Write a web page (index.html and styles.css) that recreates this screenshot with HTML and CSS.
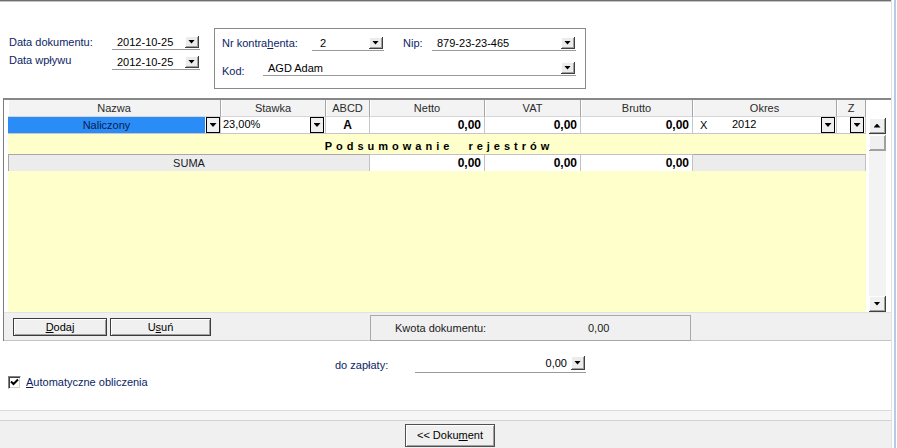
FILE: index.html
```html
<!DOCTYPE html>
<html lang="pl">
<head>
<meta charset="utf-8">
<title>Dokument</title>
<link rel="stylesheet" href="styles.css">
</head>
<body>
<div class="app">
  <div class="main">
    <div class="topline"></div>

    <div class="head">
      <div class="dates">
        <span class="lbl">Data dokumentu:</span>
        <div class="field"><span class="val pl5">2012-10-25</span><span class="dd"></span></div>
        <span class="lbl lbl-up">Data wpływu</span>
        <div class="field"><span class="val pl5">2012-10-25</span><span class="dd"></span></div>
      </div>

      <div class="group">
        <div class="grow">
          <span class="lbl w-nr">Nr kontra<u>h</u>enta:</span>
          <div class="field f-nr"><span class="val pl8">2</span><span class="dd"></span></div>
          <span class="lbl w-nip">Nip:</span>
          <div class="field f-nip"><span class="val pl5">879-23-23-465</span><span class="dd"></span></div>
        </div>
        <div class="grow grow2">
          <span class="lbl w-kod">Kod:</span>
          <div class="field f-kod"><span class="val pl5">AGD Adam</span><span class="dd"></span></div>
        </div>
      </div>
    </div>

    <div class="gridframe">
      <div class="gridbody">
        <div class="table">
          <div class="row hdr">
            <div class="c">Nazwa</div>
            <div class="c">Stawka</div>
            <div class="c">ABCD</div>
            <div class="c">Netto</div>
            <div class="c">VAT</div>
            <div class="c">Brutto</div>
            <div class="c">Okres</div>
            <div class="c">Z</div>
          </div>
          <div class="row rdata">
            <div class="c cflex"><span class="sel">Naliczony</span><span class="ddf"></span></div>
            <div class="c cflex"><span class="val pl2">23,00%</span><span class="ddf"></span></div>
            <div class="c bold center">A</div>
            <div class="c bold num">0,00</div>
            <div class="c bold num">0,00</div>
            <div class="c bold num">0,00</div>
            <div class="c cflex"><span class="okx">X</span><span class="val">2012</span><span class="ddf"></span></div>
            <div class="c cflex end"><span class="ddf"></span></div>
          </div>
          <div class="rtitle">Podsumowanie rejestrów</div>
          <div class="row rsum">
            <div class="c gray span3 center">SUMA</div>
            <div class="c bold num">0,00</div>
            <div class="c bold num">0,00</div>
            <div class="c bold num">0,00</div>
            <div class="c gray span2"></div>
          </div>
          <div class="fill"></div>
        </div>
        <div class="vscroll">
          <div class="sb"><span class="arr-up"></span></div>
          <div class="thumb"></div>
          <div class="track"></div>
          <div class="sb"><span class="arr-down"></span></div>
        </div>
      </div>
      <div class="bbar">
        <div class="btn b-dodaj"><u>D</u>odaj</div>
        <div class="btn b-usun">U<u>s</u>uń</div>
        <div class="kwota"><span class="k-lbl">Kwota dokumentu:</span><span>0,00</span></div>
      </div>
    </div>

    <div class="below">
      <div class="pay">
        <span class="lbl pay-lbl">do zapłaty:</span>
        <div class="field f-pay"><span class="val right">0,00</span><span class="dd"></span></div>
      </div>
      <div class="chkrow">
        <span class="chk"><svg width="9" height="9" viewBox="0 0 9 9"><polyline points="1,3.5 3.5,6 8,1.5" fill="none" stroke="#000" stroke-width="2"/></svg></span>
        <span class="lbl chk-lbl"><u>A</u>utomatyczne obliczenia</span>
      </div>
    </div>

    <div class="footer">
      <div class="fband"></div>
      <div class="btn b-doc">&lt;&lt; Doku<u>m</u>ent</div>
    </div>
  </div>
  <div class="edge"></div>
</div>
</body>
</html>
```

FILE: styles.css
```css
* { box-sizing: border-box; }
html, body { margin: 0; padding: 0; }
body {
  width: 897px; height: 448px; overflow: hidden; background: #fff;
  font-family: "Liberation Sans", Arial, sans-serif; font-size: 11px; color: #000;
}
u { text-decoration: underline; text-underline-offset: 1px; }
.app { display: flex; width: 897px; height: 448px; }
.main { width: 891px; display: flex; flex-direction: column; }
.edge { width: 6px; background: linear-gradient(to right, #e2e2e2 0 1px, #fff 1px 3px, #b5cce9 3px 5px, #fff 5px 6px); }
.topline { height: 2px; background: linear-gradient(#6e6e6e 0 1px, #c4c4c4 1px 2px); }

/* header fields */
.head { height: 96px; display: flex; align-items: flex-start; }
.dates {
  margin-left: 9px; margin-top: 33px;
  display: grid; grid-template-columns: 103px 88px; grid-template-rows: 15px 15px; row-gap: 5px;
}
.lbl { color: #0c1e66; line-height: 14px; white-space: nowrap; }
.lbl-up { margin-top: -2px; }
.field { display: flex; align-items: flex-start; border-bottom: 1px solid #9a9a9a; height: 15px; }
.val { flex: 1; line-height: 14px; white-space: nowrap; }
.pl2 { padding-left: 2px; }
.pl5 { padding-left: 5px; }
.pl8 { padding-left: 8px; }
.right { text-align: right; padding-right: 4px; }
.dd {
  width: 14px; height: 12px; margin: 1px 1px 0 0; background: #ececec;
  border-right: 1px solid #404040; border-bottom: 1px solid #404040;
  box-shadow: inset 1px 1px 0 #fff, inset -1px -1px 0 #a0a0a0;
  display: flex; align-items: center; justify-content: center;
}
.dd::after, .ddf::after, .arr-down {
  content: ""; width: 7px; height: 4px; background: #000;
  clip-path: polygon(0 0, 100% 0, 50% 100%);
}
.arr-up { width: 7px; height: 4px; background: #000; clip-path: polygon(50% 0, 100% 100%, 0 100%); }

.group {
  margin-left: 14px; margin-top: 26px; width: 372px; height: 61px;
  border: 1px solid #8a8a8a; padding: 7px 0 0 7px;
}
.grow { display: flex; align-items: flex-start; }
.grow2 { margin-top: 10px; }
.w-nr { width: 90px; }
.f-nr { width: 72px; }
.w-nip { width: 29px; margin-left: 19px; }
.f-nip { width: 144px; }
.w-kod { width: 41px; margin-top: 3px; }
.f-kod { width: 313px; }

/* grid */
.gridframe {
  margin-left: 3px; width: 888px; height: 243px;
  border-top: 2px solid #878787; border-left: 1px solid #7c7c7c;
  display: flex; flex-direction: column;
}
.gridbody { display: flex; padding-left: 4px; height: 213px; border-bottom: 1px solid #e2e2e2; }
.table { width: 858px; display: flex; flex-direction: column; background: #ffffcc; }
.row { display: grid; grid-template-columns: 213px 105px 44px 115px 96px 112px 144px 29px; }
.c { line-height: 16px; white-space: nowrap; overflow: hidden; }
.hdr { height: 17px; }
.hdr .c {
  background: #f3f3f3; border-right: 1px solid #a6a6a6; border-bottom: 1px solid #d6d6d6;
  box-shadow: inset 1px 0 0 #fff; text-align: center; color: #2a2a2a;
}
.rdata { height: 17px; }
.rdata .c { background: #fff; border-right: 1px solid #c6c6c6; border-bottom: 1px solid #c6c6c6; }
.cflex { display: flex; align-items: stretch; }
.end { justify-content: flex-end; }
.sel { width: 197px; margin-right: 1px; background: #2a8cf6; color: #0b1a4d; text-align: center; }
.ddf {
  width: 14px; height: 16px; margin-right: 1px; border: 1px solid #000; background: #efefef;
  display: flex; align-items: center; justify-content: center; flex: none;
}
.cflex .sel + .ddf { margin-right: 0; }
.okx { width: 39px; padding-left: 7px; }
.bold { font-weight: bold; font-size: 12px; }
.center { text-align: center; }
.num { text-align: right; padding-right: 3px; }
.rtitle {
  height: 20px; padding-top: 3px; line-height: 18px; text-align: center; font-weight: bold;
  letter-spacing: 4px; word-spacing: 8px; padding-left: 4px; color: #000;
}
.rsum { height: 17px; }
.rsum .c { background: #fff; border-top: 1px solid #c2c2c2; border-right: 1px solid #c2c2c2; }
.rsum .c.gray { background: #ececec; border-top-color: #a8a8a8; }
.rsum .span3 { grid-column: span 3; border-left: 1px solid #a8a8a8; color: #1a1a1a; font-size: 11px; font-weight: normal; }
.rsum .span2 { grid-column: span 2; }
.fill { flex: 1; }

.vscroll {
  margin-left: 3px; margin-top: 18px; width: 17px; height: 194px;
  display: flex; flex-direction: column; background: #f3f3f3;
}
.sb, .thumb {
  height: 16px; width: 17px; background: #f0f0f0;
  border-right: 1px solid #404040; border-bottom: 1px solid #404040;
  box-shadow: inset 1px 1px 0 #fff, inset -1px -1px 0 #a0a0a0;
  display: flex; align-items: center; justify-content: center;
}
.thumb { margin-top: 1px; border-color: #a0a0a0; }
.track { flex: 1; }

.bbar {
  height: 28px; display: flex; align-items: flex-start; background: #f0f0f0;
  padding-left: 9px; border-bottom: 1px solid #c4c4c4;
}
.btn {
  height: 18px; margin-top: 5px; border: 1px solid #3c3c3c; background: #f0f0f0;
  box-shadow: inset 1px 1px 0 #fff, inset -1px -1px 0 #a0a0a0;
  text-align: center; line-height: 16px; color: #000;
}
.b-dodaj { width: 94px; }
.b-usun { width: 101px; margin-left: 3px; }
.kwota {
  margin-left: 159px; margin-top: 2px; width: 321px; height: 26px;
  border: 1px solid #a8a8a8; display: flex; align-items: center; color: #1a1a1a;
}
.k-lbl { padding-left: 24px; width: 217px; }

/* below */
.below { height: 69px; }
.pay { display: flex; align-items: flex-start; margin-left: 335px; margin-top: 14px; }
.pay-lbl { width: 80px; margin-top: 3px; }
.f-pay { width: 171px; height: 18px; }
.f-pay .val { line-height: 16px; }
.f-pay .dd { height: 14px; }
.chkrow { display: flex; align-items: center; margin-left: 8px; margin-top: 3px; }
.chk {
  width: 13px; height: 13px; background: #fff;
  border-top: 1px solid #808080; border-left: 1px solid #808080;
  border-right: 1px solid #fff; border-bottom: 1px solid #fff;
  box-shadow: inset 1px 1px 0 #404040, inset -1px -1px 0 #d4d0c8;
  display: flex; align-items: center; justify-content: center;
}
.chk svg { display: block; }
.chk-lbl { margin-left: 5px; line-height: 13px; }

/* footer */
.footer { flex: 1; border-top: 1px solid #dcdcdc; background: #f0f0f0; }
.fband { height: 10px; background: #f6f6f6; border-bottom: 1px solid #d2d2d2; }
.b-doc {
  width: 90px; height: 23px; margin: 3px 0 0 405px; line-height: 21px;
  border-color: #505050;
}
```
